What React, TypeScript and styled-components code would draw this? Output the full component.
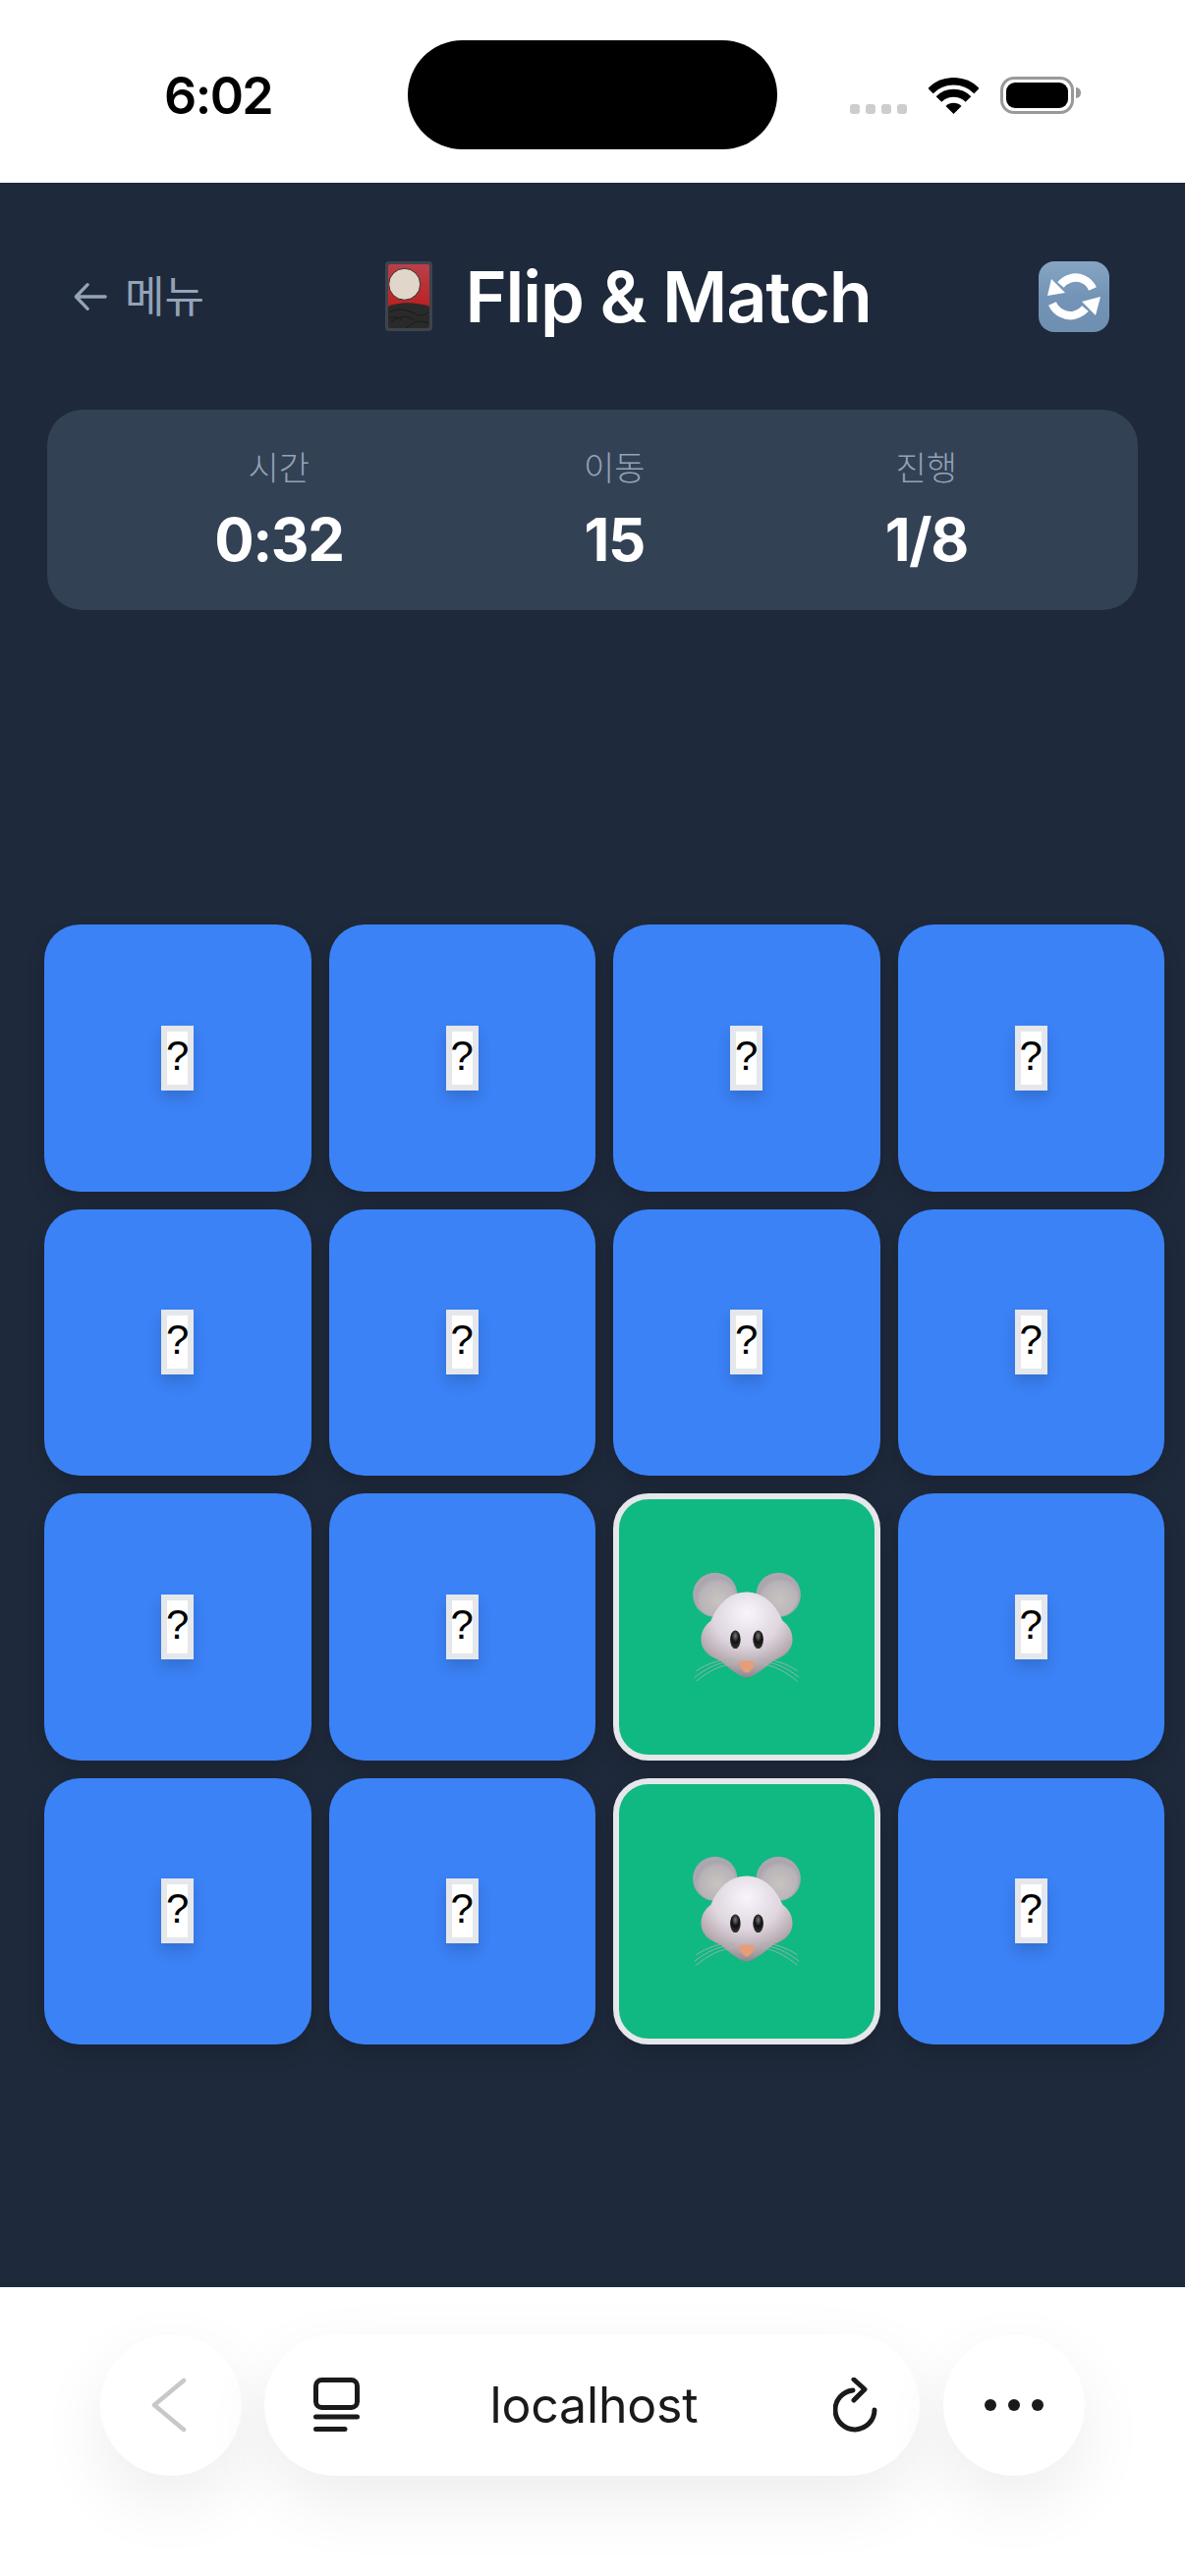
import React from "react";
import styled, { createGlobalStyle } from "styled-components";

const GlobalStyle = createGlobalStyle`
  html, body {
    margin: 0;
    padding: 0;
    background: #fff;
  }
  #root {
    width: 1206px;
    height: 2622px;
    overflow: hidden;
  }
  * {
    box-sizing: border-box;
  }
`;

const Page = styled.div`
  display: flex;
  flex-direction: column;
  width: 1206px;
  height: 2622px;
  font-family: Inter, "Noto Sans CJK KR", sans-serif;
`;

/* status bar */
const StatusBar = styled.div`
  display: flex;
  align-items: flex-start;
  height: 186px;
  background: #fff;
  padding: 41px 0 0 167px;
`;

const Clock = styled.div`
  width: 108px;
  margin-top: 31px;
  font-size: 52px;
  line-height: 52px;
  font-weight: 600;
  letter-spacing: -1.6px;
  color: #000;
  white-space: nowrap;
`;

const Island = styled.div`
  width: 376px;
  height: 111px;
  margin-left: 140px;
  border-radius: 56px;
  background: #000;
`;

const StatusIcons = styled.div`
  display: flex;
  align-items: flex-end;
  height: 75px;
  margin-left: 74px;
`;

const SignalDots = styled.div`
  display: flex;
  gap: 6px;
`;

const SignalDot = styled.span`
  width: 10px;
  height: 10px;
  border-radius: 3px;
  background: #cdcdcd;
`;

const WifiIcon = styled.svg`
  margin-left: 22px;
`;

const Battery = styled.div`
  position: relative;
  width: 75px;
  height: 38px;
  margin-left: 22px;
  padding: 3px;
  border: 3px solid #999;
  border-radius: 14px;
  background: #fff;

  &::before {
    content: "";
    display: block;
    height: 100%;
    border-radius: 9px;
    background: #000;
  }

  &::after {
    content: "";
    position: absolute;
    top: 8px;
    right: -10px;
    width: 5px;
    height: 11px;
    border-radius: 0 6px 6px 0;
    background: #999;
  }
`;

/* game area */
const Main = styled.main`
  display: flex;
  flex-direction: column;
  height: 2142px;
  background: #1e293b;
`;

const Header = styled.header`
  display: flex;
  align-items: center;
  justify-content: space-between;
  height: 231px;
  padding: 0 77px 0 75px;
`;

const BackLink = styled.div`
  display: flex;
  align-items: center;
  gap: 18px;
  width: 133px;
  font-size: 44px;
  line-height: 72px;
  color: #94a3b8;
  white-space: nowrap;
`;

const Title = styled.h1`
  display: flex;
  align-items: center;
  gap: 33px;
  margin: 0 0 0 14px;
  font-size: 72px;
  line-height: 96px;
  font-weight: 600;
  letter-spacing: -1.2px;
  color: #fff;
  white-space: nowrap;
`;

const StatsPanel = styled.section`
  display: flex;
  justify-content: space-around;
  width: 1110px;
  height: 204px;
  margin-left: 48px;
  padding: 33px 51px 0 48px;
  border-radius: 36px;
  background: #334155;
`;

const Stat = styled.div`
  display: flex;
  flex-direction: column;
  align-items: center;
`;

const StatLabel = styled.span`
  font-size: 34px;
  line-height: 54px;
  font-weight: 300;
  color: #94a3b8;
`;

const StatValue = styled.span`
  margin-top: 3px;
  font-size: 60px;
  line-height: 84px;
  font-weight: 700;
  letter-spacing: -1.4px;
  color: #fff;
`;

const Board = styled.div`
  display: grid;
  grid-template-columns: repeat(4, 271.5px);
  grid-auto-rows: 271.5px;
  gap: 18px;
  margin: 320px 0 0 45px;
`;

const Card = styled.div<{ $matched: boolean }>`
  display: flex;
  align-items: center;
  justify-content: center;
  border-radius: 36px;
  background: ${(p) => (p.$matched ? "#10b981" : "#3b82f6")};
  border: ${(p) => (p.$matched ? "6px solid #e5e7eb" : "none")};
  box-shadow: 0 10px 20px rgba(0, 0, 0, 0.14);
`;

const Hidden = styled.span`
  display: flex;
  justify-content: center;
  width: 33px;
  height: 66px;
  border: 6px solid #e5e7eb;
  background: #fff;
  font-family: "Liberation Sans", sans-serif;
  font-size: 42px;
  line-height: 50px;
  color: #000;
  box-shadow: 0 8px 14px rgba(0, 0, 0, 0.15);
`;

/* browser bar */
const BrowserBar = styled.nav`
  display: flex;
  gap: 23.5px;
  flex: 1;
  padding: 48px 0 0 101.5px;
  background: #fff;
  overflow: hidden;
`;

const RoundButton = styled.div`
  display: flex;
  align-items: center;
  justify-content: center;
  width: 144px;
  height: 144px;
  border-radius: 50%;
  background: #fff;
  box-shadow: 0 26px 70px rgba(0, 0, 0, 0.075);
`;

const AddressPill = styled.div`
  display: flex;
  align-items: center;
  justify-content: space-between;
  width: 667px;
  height: 144px;
  padding: 0 42px 0 50px;
  border-radius: 72px;
  background: #fff;
  box-shadow: 0 26px 70px rgba(0, 0, 0, 0.075);
`;

const Address = styled.span`
  margin-left: -5px;
  font-size: 50px;
  line-height: 60px;
  font-weight: 400;
  letter-spacing: -0.2px;
  color: #1a1a1a;
`;

const MoreDots = styled.div`
  display: flex;
  gap: 12px;
`;

const MoreDot = styled.span`
  width: 12px;
  height: 12px;
  border-radius: 50%;
  background: #1a1a1a;
`;

const HanafudaEmoji = () => (
  <svg width="48" height="71" viewBox="0 0 48 71">
    <defs>
      <linearGradient id="hanaRed" x1="0" y1="0" x2="0" y2="1">
        <stop offset="0" stopColor="#b8404a" />
        <stop offset="0.7" stopColor="#bb1f20" />
      </linearGradient>
    </defs>
    <rect width="48" height="71" rx="4" fill="#3d444e" />
    <rect x="3" y="3" width="42" height="65" rx="2" fill="url(#hanaRed)" />
    <circle cx="19.7" cy="23.3" r="16" fill="#e0d6c9" stroke="#3a2a2a" strokeWidth="1" />
    <path d="M3 46C14 41 30 41 45 46V66a2 2 0 0 1-2 2H5a2 2 0 0 1-2-2z" fill="#2a2a2a" />
    <path
      d="M4 52c10-5 18-3 26 1s10 1 14-1M6 62c7-7 17-7 24-2M22 68c4-6 14-9 22-5M4 58c6-2 10-1 13 2"
      fill="none"
      stroke="#161616"
      strokeWidth="0.8"
    />
  </svg>
);

const RefreshEmoji = () => (
  <svg width="72" height="72" viewBox="0 0 72 72">
    <defs>
      <linearGradient id="refreshBox" x1="0" y1="0" x2="0" y2="1">
        <stop offset="0" stopColor="#86a5c4" />
        <stop offset="0.5" stopColor="#7394b6" />
        <stop offset="1" stopColor="#6e8fb0" />
      </linearGradient>
    </defs>
    <rect width="72" height="72" rx="16" fill="url(#refreshBox)" />
    <path d="M55 28C51 19 41 14.500 32 17.500C28 18.800 25 21 22.500 24" fill="none" stroke="#fff" strokeWidth="8.500" />
    <path d="M9 35L13 18L27 32Z" fill="#fff" />
    <path d="M14 43C18 52 28 57 37 54.500C41 53.200 45 51 47.500 48" fill="none" stroke="#fff" strokeWidth="8.500" />
    <path d="M63 36L44 41L58 55Z" fill="#fff" />
  </svg>
);

const MouseEmoji = ({ uid }: { uid: string }) => (
  <svg width="110" height="112" viewBox="280 275 330 337">
    <defs>
      <radialGradient id={`${uid}ear`} cx="55%" cy="60%" r="55%">
        <stop offset="0" stopColor="#c9c3c0" />
        <stop offset="0.8" stopColor="#b8b3b8" />
        <stop offset="1" stopColor="#aaa5ae" />
      </radialGradient>
      <radialGradient id={`${uid}head`} cx="50%" cy="25%" r="75%">
        <stop offset="0" stopColor="#f8f4fd" />
        <stop offset="0.5" stopColor="#dfd6df" />
        <stop offset="0.8" stopColor="#b7abb1" />
        <stop offset="1" stopColor="#8f8790" />
      </radialGradient>
      <radialGradient id={`${uid}eye`} cx="50%" cy="30%" r="70%">
        <stop offset="0" stopColor="#777" />
        <stop offset="0.5" stopColor="#111" />
        <stop offset="1" stopColor="#333" />
      </radialGradient>
    </defs>
    <circle cx="348" cy="345" r="68" fill="#aca7b1" />
    <circle cx="542" cy="345" r="68" fill="#aca7b1" />
    <circle cx="350" cy="349" r="62" fill={`url(#${uid}ear)`} />
    <circle cx="540" cy="349" r="62" fill={`url(#${uid}ear)`} />
    <path
      d="M445 337C385 337 352 385 335 425C315 440 305 460 305 482C305 515 330 535 365 547C385 565 425 598 445 598C465 598 505 565 525 547C560 535 585 515 585 482C585 460 575 440 555 425C538 385 505 337 445 337Z"
      fill={`url(#${uid}head)`}
    />
    <ellipse cx="410" cy="482" rx="16" ry="28" fill={`url(#${uid}eye)`} />
    <ellipse cx="480" cy="482" rx="16" ry="28" fill={`url(#${uid}eye)`} />
    <path d="M420 552C432 546 458 546 470 552C468 568 452 584 445 584C438 584 422 568 420 552Z" fill="#e69d78" />
    <path
      d="M405 542C365 542 325 555 290 578M405 549C360 550 320 570 285 598M405 556C365 560 325 580 290 610M485 542C525 542 565 555 600 578M485 549C530 550 570 570 605 598M485 556C525 560 565 580 600 610"
      fill="none"
      stroke="#a9b3ad"
      strokeWidth="2.500"
    />
  </svg>
);

const cards = Array.from({ length: 16 }, (_, i) => i);
const matched = [10, 14];

const stats = [
  { label: "시간", value: "0:32" },
  { label: "이동", value: "15" },
  { label: "진행", value: "1/8" },
];

export default function App() {
  return (
    <Page>
      <GlobalStyle />
      <StatusBar>
        <Clock>6:02</Clock>
        <Island />
        <StatusIcons>
          <SignalDots>
            <SignalDot />
            <SignalDot />
            <SignalDot />
            <SignalDot />
          </SignalDots>
          <WifiIcon width="51" height="37" viewBox="0 0 51 37">
            <path d="M2 13.5A33.2 33.2 0 0 1 49 13.5" fill="none" stroke="#000" strokeWidth="7.6" />
            <path d="M10.5 22A21.2 21.2 0 0 1 40.5 22" fill="none" stroke="#000" strokeWidth="8" />
            <path d="M25.5 37L17.5 29A11.3 11.3 0 0 1 33.5 29Z" fill="#000" />
          </WifiIcon>
          <Battery />
        </StatusIcons>
      </StatusBar>

      <Main>
        <Header>
          <BackLink>
            <svg width="36" height="30" viewBox="0 0 36 30">
              <path d="M34 15H3M15 2L2.500 15L15 28" fill="none" stroke="#94a3b8" strokeWidth="3.500" strokeLinecap="round" strokeLinejoin="round" />
            </svg>
            <span>메뉴</span>
          </BackLink>
          <Title>
            <HanafudaEmoji />
            <span>Flip &amp; Match</span>
          </Title>
          <RefreshEmoji />
        </Header>

        <StatsPanel>
          {stats.map((s) => (
            <Stat key={s.label}>
              <StatLabel>{s.label}</StatLabel>
              <StatValue>{s.value}</StatValue>
            </Stat>
          ))}
        </StatsPanel>

        <Board>
          {cards.map((i) => {
            const isMatched = matched.includes(i);
            return (
              <Card key={i} $matched={isMatched}>
                {isMatched ? <MouseEmoji uid={`m${i}`} /> : <Hidden>?</Hidden>}
              </Card>
            );
          })}
        </Board>
      </Main>

      <BrowserBar>
        <RoundButton>
          <svg width="40" height="60" viewBox="0 0 40 60">
            <path d="M33 5L3 30L33 55" fill="none" stroke="#c8c8c8" strokeWidth="4.500" strokeLinecap="round" strokeLinejoin="round" />
          </svg>
        </RoundButton>
        <AddressPill>
          <svg width="47" height="56" viewBox="0 0 47 56">
            <rect x="2.5" y="2.5" width="42" height="28" rx="6" fill="none" stroke="#1a1a1a" strokeWidth="5" />
            <path d="M2.5 40H44.5M2.5 52.5H32" fill="none" stroke="#1a1a1a" strokeWidth="5" strokeLinecap="round" />
          </svg>
          <Address>localhost</Address>
          <svg width="46" height="56" viewBox="848 2419 46 56">
            <path d="M868 2432A20 20 0 1 0 890 2452" fill="none" stroke="#1a1a1a" strokeWidth="5" strokeLinecap="round" />
            <path d="M869 2421L880 2431L869 2442" fill="none" stroke="#1a1a1a" strokeWidth="5" strokeLinecap="round" strokeLinejoin="round" />
          </svg>
        </AddressPill>
        <RoundButton>
          <MoreDots>
            <MoreDot />
            <MoreDot />
            <MoreDot />
          </MoreDots>
        </RoundButton>
      </BrowserBar>
    </Page>
  );
}
